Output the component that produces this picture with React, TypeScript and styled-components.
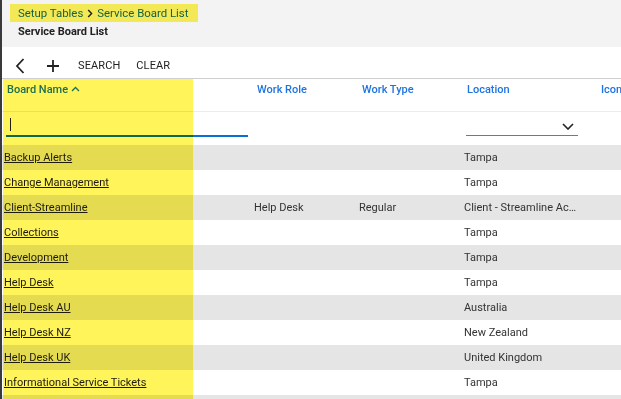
import React from "react";
import styled, { createGlobalStyle } from "styled-components";

const GlobalStyle = createGlobalStyle`
  html, body { margin: 0; padding: 0; background: #fff; }
  body { font-family: Roboto, "Liberation Sans", Arial, sans-serif; color: #333; }
`;

const Page = styled.div`
  position: relative;
  width: 621px;
  height: 399px;
  overflow: hidden;
  background: #fff;
`;

const EdgeBar = styled.div`
  position: absolute;
  left: 0;
  top: 0;
  bottom: 0;
  width: 2px;
  background: #3a3a3a;
  z-index: 5;
`;

const Header = styled.header`
  height: 47px;
  background: #f3f3f3;
  padding: 2px 0 0 10px;
  box-sizing: border-box;
`;

const Breadcrumb = styled.nav`
  position: relative;
  display: inline-flex;
  align-items: center;
  gap: 4px;
  height: 18px;
  padding: 0 10px 0 8px;
  font-size: 11.4px;
  color: #1565c0;
`;

const Highlight = styled.div`
  position: absolute;
  inset: 0;
  background: #fff45a;
  mix-blend-mode: multiply;
  pointer-events: none;
  z-index: 3;
`;

const Title = styled.h1`
  margin: 2px 0 0 8px;
  font-size: 11px;
  font-weight: 700;
  color: #222;
  line-height: 16px;
`;

const Toolbar = styled.div`
  height: 32px;
  display: flex;
  align-items: center;
  padding: 6px 0 0 15px;
  box-sizing: border-box;
  border-bottom: 1px solid #cfcfcf;
`;

const IconButton = styled.button<{ $gap?: number }>`
  border: 0;
  background: none;
  padding: 0;
  margin-right: ${(p) => p.$gap ?? 0}px;
  display: flex;
  align-items: center;
  color: #222;
`;

const TextButton = styled.button`
  border: 0;
  background: none;
  padding: 0;
  margin-right: 16px;
  font-family: inherit;
  font-size: 11px;
  color: #222;
  letter-spacing: 0.1px;
`;

const Table = styled.div`
  position: relative;
`;

const Grid = styled.div<{ $h: number; $bg?: string; $line?: boolean }>`
  display: grid;
  grid-template-columns: 250px 105px 105px 134px 1fr;
  height: ${(p) => p.$h}px;
  background: ${(p) => p.$bg ?? "#fff"};
  border-bottom: ${(p) => (p.$line ? "1px solid #ececec" : "none")};
  box-sizing: border-box;
`;

const HeadCell = styled.div`
  padding: 4px 0 0 7px;
  font-size: 11px;
  font-weight: 500;
  color: #1f74e0;
  white-space: nowrap;
  display: flex;
  align-items: flex-start;
  gap: 3px;
`;

const Cell = styled.div`
  padding: 0 14px 0 4px;
  font-size: 11px;
  color: #333;
  display: flex;
  align-items: center;
  white-space: nowrap;
  overflow: hidden;
  min-width: 0;
`;

const CellText = styled.span`
  overflow: hidden;
  text-overflow: ellipsis;
`;

const LinkText = styled.a`
  color: #1e1e1e;
  text-decoration: underline;
`;

const FilterCell = styled.div`
  position: relative;
`;

const TextFilter = styled.div`
  position: absolute;
  left: 6px;
  right: 2px;
  top: 6px;
  height: 17px;
  border-bottom: 2px solid #0a6fd4;
`;

const Caret = styled.span`
  position: absolute;
  left: 4px;
  top: 0;
  width: 1px;
  height: 13px;
  background: #222;
`;

const SelectFilter = styled.div`
  position: absolute;
  left: 6px;
  right: 16px;
  top: 6px;
  height: 17px;
  border-bottom: 1px solid #777;
  display: flex;
  justify-content: flex-end;
  align-items: center;
  padding-right: 4px;
`;

const ColumnHighlight = styled(Highlight)`
  inset: auto;
  left: 3px;
  top: 0;
  width: 190px;
  height: 400px;
`;

const rows = [
  { name: "Backup Alerts", role: "", type: "", loc: "Tampa" },
  { name: "Change Management", role: "", type: "", loc: "Tampa" },
  { name: "Client-Streamline", role: "Help Desk", type: "Regular", loc: "Client - Streamline Accounting" },
  { name: "Collections", role: "", type: "", loc: "Tampa" },
  { name: "Development", role: "", type: "", loc: "Tampa" },
  { name: "Help Desk", role: "", type: "", loc: "Tampa" },
  { name: "Help Desk AU", role: "", type: "", loc: "Australia" },
  { name: "Help Desk NZ", role: "", type: "", loc: "New Zealand" },
  { name: "Help Desk UK", role: "", type: "", loc: "United Kingdom" },
  { name: "Informational Service Tickets", role: "", type: "", loc: "Tampa" },
];

export default function App() {
  return (
    <>
      <GlobalStyle />
      <Page>
        <EdgeBar />
        <Header>
          <Breadcrumb>
            <span>Setup Tables</span>
            <svg width="6" height="9" viewBox="0 0 6 9">
              <polyline points="1.2,1 4.6,4.5 1.2,8" fill="none" stroke="#222" strokeWidth="1.4" />
            </svg>
            <span>Service Board List</span>
            <Highlight />
          </Breadcrumb>
          <Title>Service Board List</Title>
        </Header>
        <Toolbar>
          <IconButton $gap={22}>
            <svg width="10" height="16" viewBox="0 0 10 16">
              <polyline points="8.5,1 2,8 8.5,15" fill="none" stroke="#222" strokeWidth="1.8" />
            </svg>
          </IconButton>
          <IconButton $gap={19}>
            <svg width="12" height="12" viewBox="0 0 12 12">
              <path d="M6 0 V12 M0 6 H12" stroke="#222" strokeWidth="1.8" />
            </svg>
          </IconButton>
          <TextButton>SEARCH</TextButton>
          <TextButton>CLEAR</TextButton>
        </Toolbar>
        <Table>
          <Grid $h={33} $line>
            <HeadCell>
              Board Name
              <svg width="9" height="9" viewBox="0 0 9 9" style={{ marginTop: 2 }}>
                <polyline points="1,6 4.5,2.5 8,6" fill="none" stroke="currentColor" strokeWidth="1.3" />
              </svg>
            </HeadCell>
            <HeadCell>Work Role</HeadCell>
            <HeadCell>Work Type</HeadCell>
            <HeadCell>Location</HeadCell>
            <HeadCell>Icon</HeadCell>
          </Grid>
          <Grid $h={33}>
            <FilterCell>
              <TextFilter>
                <Caret />
              </TextFilter>
            </FilterCell>
            <FilterCell />
            <FilterCell />
            <FilterCell>
              <SelectFilter>
                <svg width="12" height="7" viewBox="0 0 12 7">
                  <polyline points="1,1 6,6 11,1" fill="none" stroke="#222" strokeWidth="1.6" />
                </svg>
              </SelectFilter>
            </FilterCell>
            <FilterCell />
          </Grid>
          {rows.map((r, i) => (
            <Grid key={r.name} $h={25} $bg={i % 2 === 0 ? "#e5e5e5" : "#fff"}>
              <Cell>
                <LinkText href="#">{r.name}</LinkText>
              </Cell>
              <Cell>{r.role}</Cell>
              <Cell>{r.type}</Cell>
              <Cell>
                <CellText>{r.loc}</CellText>
              </Cell>
              <Cell />
            </Grid>
          ))}
          <Grid $h={25} $bg="#e5e5e5" />
          <ColumnHighlight />
        </Table>
      </Page>
    </>
  );
}
